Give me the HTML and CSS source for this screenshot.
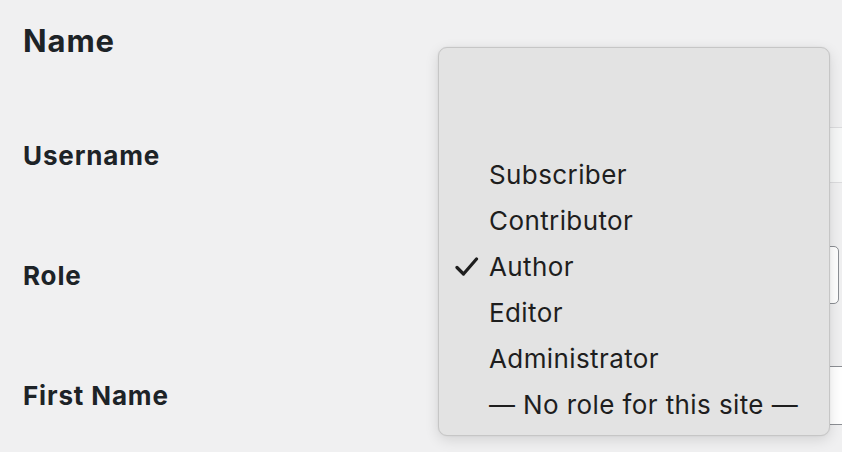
FILE: index.html
```html
<!DOCTYPE html>
<html>
<head>
<meta charset="utf-8">
<link rel="stylesheet" href="styles.css">
</head>
<body>
<div class="page">
  <h2 class="heading">Name</h2>
  <div class="row row-user">
    <div class="label">Username</div>
    <div class="field"><div class="input disabled"></div></div>
  </div>
  <div class="row row-role">
    <div class="label">Role</div>
    <div class="field"><div class="select"></div></div>
  </div>
  <div class="row row-first">
    <div class="label">First Name</div>
    <div class="field"><div class="input"></div></div>
  </div>

  <div class="menu">
    <div class="item">Subscriber</div>
    <div class="item">Contributor</div>
    <div class="item checked"><svg class="check" width="24" height="20" viewBox="0 0 24 20"><path d="M2 10.5 L8.5 17 L21.5 2" fill="none" stroke="#1e1e1e" stroke-width="3.2" stroke-linecap="round" stroke-linejoin="round"/></svg>Author</div>
    <div class="item">Editor</div>
    <div class="item">Administrator</div>
    <div class="item">— No role for this site —</div>
  </div>
</div>
</body>
</html>
```
FILE: styles.css
```css
html, body {
  margin: 0;
  padding: 0;
  background: #f0f0f1;
  overflow: hidden;
}
.page {
  position: relative;
  width: 842px;
  height: 452px;
  overflow: hidden;
  font-family: Inter, "Noto Sans", sans-serif;
  color: #1d2327;
}
.heading {
  margin: 0;
  padding: 22px 0 0 23px;
  font-size: 31px;
  letter-spacing: 0.9px;
  font-weight: 700;
  line-height: 38px;
  height: 38px;
}
.row {
  display: flex;
  align-items: center;
  height: 120px;
}
.row-user {
  margin-top: 35px;
}
.label {
  width: 440px;
  padding-left: 23px;
  box-sizing: border-box;
  font-size: 26px;
  letter-spacing: 0.85px;
  font-weight: 700;
  flex: none;
}
.field {
  flex: none;
  width: 500px;
}
.input {
  height: 54px;
  border: 1px solid #8c8f94;
  background: #fff;
  border-radius: 4px;
}
.input.disabled {
  border-color: #dcdcde;
  background: #f6f7f7;
}
.select {
  width: 399px;
  height: 58px;
  border: 1.5px solid #8c8f94;
  border-radius: 5px;
  background: #fff;
  box-sizing: border-box;
}
.row-first .input {
  height: 57px;
}
.menu {
  position: absolute;
  left: 438px;
  top: 47px;
  width: 392px;
  height: 389px;
  box-sizing: border-box;
  padding: 104px 0 0 0;
  background: #e3e3e3;
  border: 1px solid #c6c6c6;
  border-radius: 9px;
  box-shadow: 0 4px 14px rgba(0, 0, 0, 0.12), 0 0 2px rgba(0, 0, 0, 0.08);
}
.item {
  position: relative;
  height: 46px;
  line-height: 46px;
  padding-left: 50px;
  font-size: 26px;
  letter-spacing: 0.4px;
  color: #1e1e1e;
  white-space: nowrap;
}
.check {
  position: absolute;
  left: 16px;
  top: 13px;
}
```
